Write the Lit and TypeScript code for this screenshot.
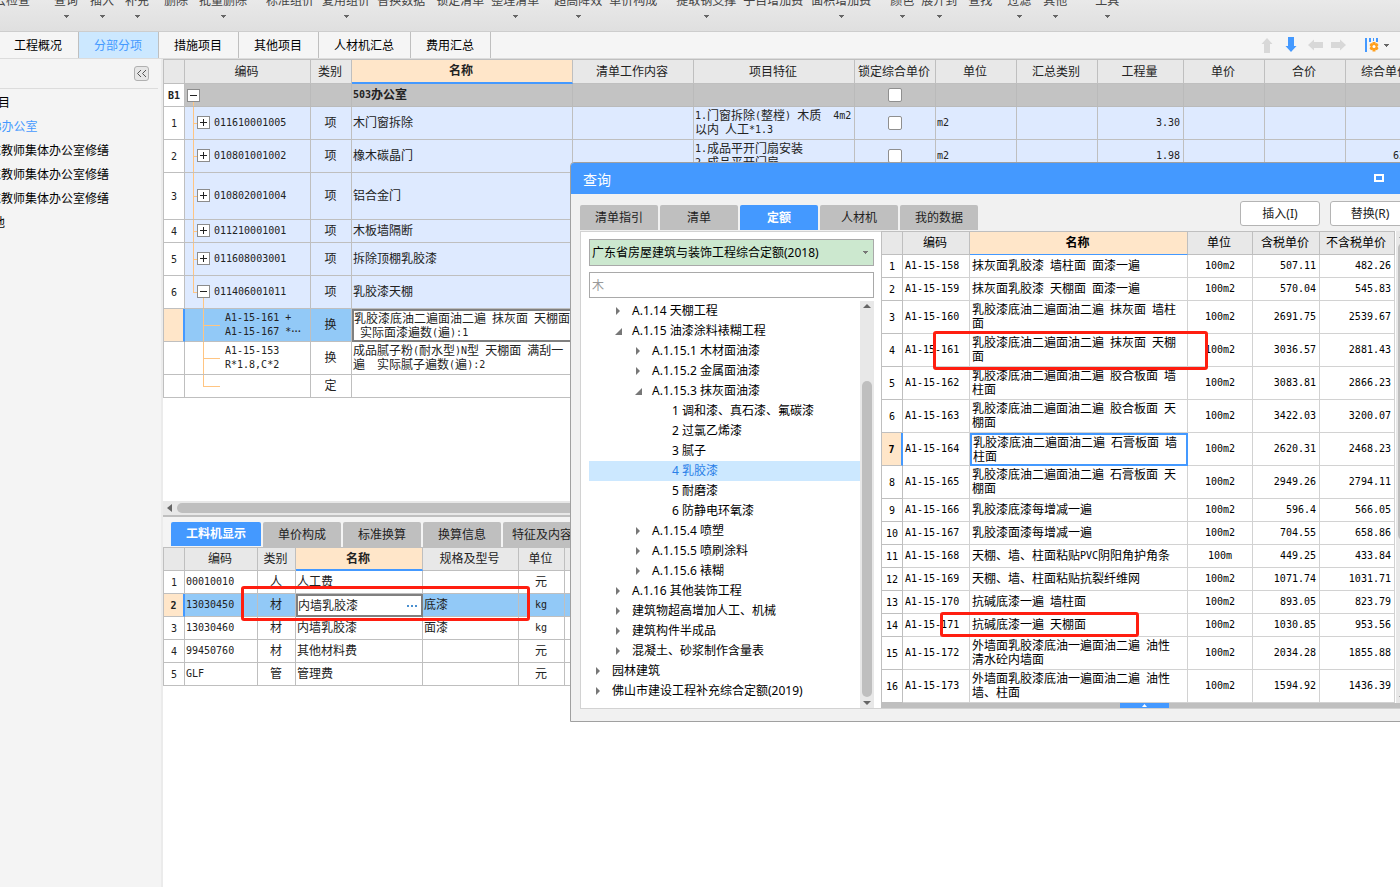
import { LitElement, html, css, svg, nothing } from "lit";
import { customElement, state } from "lit/decorators.js";
import { classMap } from "lit/directives/class-map.js";

/* Grid text: ideographs at 12px, Latin runs in a half-width monospace. */
const mono = (text: string) =>
  text
    .split(/([\x20-\x7e]+)/)
    .filter((part) => part)
    .map((part) => (/^[\x20-\x7e]/.test(part) ? html`<span class="half">${part}</span>` : part));

const lines = (text: string) => text.split("\n").map((l) => html`<span class="line">${mono(l)}</span>`);

const caret = () => html`<svg class="caret" width="5" height="3" viewBox="0 0 5 3" aria-hidden="true"><path d="M0 0h5v1h-1v1h-1v1h-1v-1h-1v-1h-1z" fill="currentColor" /></svg>`;

const shared = css`
  * { box-sizing: border-box; }
  button, input, select { font: inherit; color: inherit; margin: 0; border-radius: 0; }
  button { background: none; border: 0; padding: 0; white-space: nowrap; cursor: pointer; }
  ul { list-style: none; margin: 0; padding: 0; }
  table { border-collapse: separate; border-spacing: 0; table-layout: fixed; color: #222; }
  th, td {
    padding: 0 2px; line-height: 14px; font-weight: 400; text-align: left; white-space: pre;
    border-right: 1px solid #bfbfbf; border-bottom: 1px solid #bfbfbf; overflow: hidden; position: relative;
  }
  thead th { background: #e8e8e8; text-align: center; border-top: 1px solid #bfbfbf; height: 25px; padding: 0 2px 0 0; }
  th:first-child { border-left: 1px solid #bfbfbf; text-align: center; padding: 0; }
  tbody th { background: #fff; }
  thead th.hot { background: #ffe6c9; font-weight: 700; border-bottom: 2px solid #4499ff; }
  .half { font-family: "DejaVu Sans Mono", monospace; font-size: 10px; line-height: 10px; }
  td .half { vertical-align: 1px; }
  .line { display: block; height: 14px; }
  .c { text-align: center; }
  .r { text-align: right; padding-right: 3px; }
  .tab {
    width: 78px; height: 25px; background: #bfbfbf; color: #222; border-radius: 2px 2px 0 0; line-height: 24px; flex: none;
  }
  .tab.on { background: #4499ff; color: #fff; font-weight: 700; }
  .caret { display: block; color: #666; }
`;

type Tool = [label: string, gap: string, menu?: boolean];
const TOOLS: Tool[] = [
  ["云检查", "g0"], ["查询", "g24", true], ["插入", "g12", true], ["补充", "g11", true], ["删除", "g15"],
  ["批量删除", "g11", true], ["标准组价", "g19"], ["复用组价", "g8", true], ["替换数据", "g7"],
  ["锁定清单", "g11"], ["整理清单", "g7", true], ["超高降效", "g15", true], ["单价构成", "g7"],
  ["提取钢支撑", "g19", true], ["子目增加费", "g7"], ["面积增加费", "g8", true], ["颜色", "g19", true],
  ["展开到", "g7", true], ["查找", "g11"], ["过滤", "g15", true], ["其他", "g12", true], ["工具", "g28", true],
];

interface Item {
  no: string; kind: "section" | "item" | "sub"; h: string; box?: string; code: string; type: string;
  name: string; feature?: string; unit?: string; qty?: string; price?: string; last?: boolean; active?: boolean; lock?: boolean;
}
const ITEMS: Item[] = [
  { no: "B1", kind: "section", h: "h23", box: "-", code: "", type: "", name: "503办公室", lock: true },
  { no: "1", kind: "item", h: "h33", box: "+", code: "011610001005", type: "项", name: "木门窗拆除", feature: "1.门窗拆除(整樘) 木质  4m2\n以内 人工*1.3", unit: "m2", qty: "3.30", lock: true },
  { no: "2", kind: "item", h: "h33", box: "+", code: "010801001002", type: "项", name: "橡木碳晶门", feature: "1.成品平开门扇安装\n2.成品平开门扇", unit: "m2", qty: "1.98", price: "63.12", lock: true },
  { no: "3", kind: "item", h: "h47", box: "+", code: "010802001004", type: "项", name: "铝合金门" },
  { no: "4", kind: "item", h: "h23", box: "+", code: "011210001001", type: "项", name: "木板墙隔断" },
  { no: "5", kind: "item", h: "h33", box: "+", code: "011608003001", type: "项", name: "拆除顶棚乳胶漆" },
  { no: "6", kind: "item", h: "h33", box: "-", code: "011406001011", type: "项", name: "乳胶漆天棚", last: true },
  { no: "", kind: "sub", h: "h33", code: "A1-15-161 +\nA1-15-167 *···", type: "换", name: "乳胶漆底油二遍面油二遍 抹灰面 天棚面\n 实际面漆遍数(遍):1", active: true },
  { no: "", kind: "sub", h: "h33", code: "A1-15-153\nR*1.8,C*2", type: "换", name: "成品腻子粉(耐水型)N型 天棚面 满刮一\n遍  实际腻子遍数(遍):2" },
  { no: "", kind: "sub", h: "h23", code: "", type: "定", name: "", last: true },
];

@customElement("bill-grid")
class BillGrid extends LitElement {
  static styles = [
    shared,
    css`
      :host { display: block; overflow: hidden; background: #fff; min-height: 0; }
      table { width: 1264px; }
      td { padding-left: 1px; }
      .w22 { width: 22px; } .w126 { width: 126px; } .w41 { width: 41px; } .w221 { width: 221px; }
      .w121 { width: 121px; } .w161 { width: 161px; } .w81 { width: 81px; } .w86 { width: 86px; }
      .h23 { height: 23px; } .h33 { height: 33px; } .h47 { height: 47px; }
      .section td { background: #c3c3c3; border-color: #bababa; font-weight: 700; }
      .section th { font-weight: 700; }
      .item td { background: #deeaff; }
      .active td { background: #92c9f7; }
      .active th { background: #ffe6c9; border-right: 2px solid #4499ff; }
      .active td.name { background: #fff; border: 2px solid #808080; padding: 0; }
      .entry { display: flex; align-items: center; gap: 4px; padding-left: 11px; }
      .section .entry { padding-left: 1px; }
      .sub .entry { padding-left: 39px; }
      .box { width: 13px; height: 13px; background: #fff; border: 1px solid #8c8c8c; position: relative; z-index: 1; flex: none; display: block; }
      .item .box { margin-bottom: 2px; }
      .box svg { display: block; }
      .stem { position: absolute; width: 1px; background: #ffc582; top: 0; bottom: -1px; left: 8px; }
      .twig { position: absolute; height: 1px; background: #ffc582; left: 8px; width: 6px; top: 50%; }
      .stem.end { bottom: 50%; }
      .section .stem, .stem.child { top: 50%; }
      .sub .stem, .stem.child { left: 18px; }
      .sub .twig { left: 18px; width: 17px; }
      input { appearance: none; width: 14px; height: 14px; border: 1px solid #8f8f8f; border-radius: 2px; background: #fff; display: block; margin: 0 auto; }
    `,
  ];

  private box(sign: string) {
    return html`<button class="box" aria-label=${sign === "+" ? "展开" : "折叠"}><svg width="11" height="11" viewBox="0 0 11 11">
      <path d="M2 5.5h7${sign === "+" ? "M5.5 2v7" : ""}" stroke="#222" fill="none" /></svg></button>`;
  }

  render() {
    const cols = ["w22", "w126", "w41", "w221", "w121", "w161", "w81", "w81", "w81", "w86", "w81", "w81", "w81"];
    const heads = ["", "编码", "类别", "名称", "清单工作内容", "项目特征", "锁定综合单价", "单位", "汇总类别", "工程量", "单价", "合价", "综合单价"];
    return html`<table>
      <colgroup>${cols.map((c) => html`<col class=${c} />`)}</colgroup>
      <thead><tr>${heads.map((h) => html`<th scope="col" class=${classMap({ hot: h === "名称" })}>${h}</th>`)}</tr></thead>
      <tbody>${ITEMS.map((i) => html`<tr class=${classMap({ [i.kind]: true, [i.h]: true, active: !!i.active })}>
        <th scope="row">${mono(i.no)}</th>
        <td><span class=${classMap({ stem: true, end: !!i.last, root: i.kind === "section" })}></span>${i.kind === "section" ? nothing : html`<span class="twig"></span>`}${i.kind === "item" && i.last ? html`<span class="stem child"></span>` : nothing}<div class="entry">${i.box ? this.box(i.box) : nothing}<div>${i.code ? lines(i.code) : nothing}</div></div></td>
        <td class="c">${i.type}</td>
        <td class="name">${lines(i.name)}</td>
        <td></td>
        <td>${i.feature ? lines(i.feature) : nothing}</td>
        <td>${i.lock ? html`<input type="checkbox" aria-label="锁定综合单价" />` : nothing}</td>
        <td>${mono(i.unit ?? "")}</td>
        <td></td>
        <td class="r">${mono(i.qty ?? "")}</td>
        <td></td><td></td>
        <td class="r">${mono(i.price ?? "")}</td>
      </tr>`)}</tbody>
    </table>`;
  }
}

const RESOURCES = [
  ["1", "00010010", "人", "人工费", "", "元"],
  ["2", "13030450", "材", "内墙乳胶漆", "底漆", "kg"],
  ["3", "13030460", "材", "内墙乳胶漆", "面漆", "kg"],
  ["4", "99450760", "材", "其他材料费", "", "元"],
  ["5", "GLF", "管", "管理费", "", "元"],
];

@customElement("resource-panel")
class ResourcePanel extends LitElement {
  static styles = [
    shared,
    css`
      :host { display: block; background: #fff; overflow: hidden; position: relative; }
      .tabs { display: flex; gap: 2px; padding: 5px 8px 0; background: #f4f4f4; }
      .tab.on { height: 24px; }
      .tab:first-child { width: 90px; }
      table { width: 483px; }
      thead th { height: 24px; }
      tbody tr { height: 23px; }
      td { padding: 0 2px 0 1px; }
      .w22 { width: 22px; } .w73 { width: 73px; } .w38 { width: 38px; } .w127 { width: 127px; } .w96 { width: 96px; } .w46 { width: 46px; } .w81 { width: 81px; }
      .active td { background: #92c9f7; }
      .active th { background: #ffe6c9; border-right: 2px solid #4499ff; font-weight: 700; }
      .active td.name { background: #fff; border: 2px solid #808080; padding: 0 3px 0 0; }
      .pick { display: flex; justify-content: space-between; align-items: center; }
      .more { width: 11px; height: 10px; display: block; }
      .more svg { display: block; }
      .mark { position: absolute; left: 78px; top: 69px; width: 289px; height: 35px; border: 3px solid #ff1e10; border-radius: 3px; pointer-events: none; }
    `,
  ];
  render() {
    const cols = ["w22", "w73", "w38", "w127", "w96", "w46", "w81"];
    return html`
      <div class="tabs">
        ${["工料机显示", "单价构成", "标准换算", "换算信息", "特征及内容"].map((t, i) => html`<button class=${classMap({ tab: true, on: i === 0 })}>${t}</button>`)}
      </div>
      <table>
        <colgroup>${cols.map((c) => html`<col class=${c} />`)}</colgroup>
        <thead><tr>${["", "编码", "类别", "名称", "规格及型号", "单位", ""].map((h) => html`<th scope="col" class=${classMap({ hot: h === "名称" })}>${h}</th>`)}</tr></thead>
        <tbody>${RESOURCES.map(([no, code, type, name, spec, unit]) => html`<tr class=${classMap({ active: no === "2" })}>
          <th scope="row">${mono(no)}</th><td>${mono(code)}</td><td class="c">${type}</td>
          <td class="name">${no === "2"
            ? html`<div class="pick"><span>${name}</span><button class="more" aria-label="选择"><svg width="11" height="10"><path d="M0 4h2v2h-2zM4 4h2v2h-2zM8 4h2v2h-2z" fill="#4a90d0" /></svg></button></div>`
            : name}</td>
          <td>${spec}</td><td class="c">${mono(unit)}</td><td></td></tr>`)}</tbody>
      </table>
      <div class="mark"></div>`;
  }
}

type Node = [depth: number, label: string, mark: "closed" | "open" | "leaf"];
const NODES: Node[] = [
  [1, "A.1.14 天棚工程", "closed"], [1, "A.1.15 油漆涂料裱糊工程", "open"],
  [2, "A.1.15.1 木材面油漆", "closed"], [2, "A.1.15.2 金属面油漆", "closed"], [2, "A.1.15.3 抹灰面油漆", "open"],
  [3, "1 调和漆、真石漆、氟碳漆", "leaf"], [3, "2 过氯乙烯漆", "leaf"], [3, "3 腻子", "leaf"], [3, "4 乳胶漆", "leaf"],
  [3, "5 耐磨漆", "leaf"], [3, "6 防静电环氧漆", "leaf"],
  [2, "A.1.15.4 喷塑", "closed"], [2, "A.1.15.5 喷刷涂料", "closed"], [2, "A.1.15.6 裱糊", "closed"],
  [1, "A.1.16 其他装饰工程", "closed"], [1, "建筑物超高增加人工、机械", "closed"], [1, "建筑构件半成品", "closed"],
  [1, "混凝土、砂浆制作含量表", "closed"], [0, "园林建筑", "closed"], [0, "佛山市建设工程补充综合定额(2019)", "closed"],
];

const QUOTAS = [
  ["A1-15-158", "抹灰面乳胶漆 墙柱面 面漆一遍", "100m2", "507.11", "482.26"],
  ["A1-15-159", "抹灰面乳胶漆 天棚面 面漆一遍", "100m2", "570.04", "545.83"],
  ["A1-15-160", "乳胶漆底油二遍面油二遍 抹灰面 墙柱\n面", "100m2", "2691.75", "2539.67"],
  ["A1-15-161", "乳胶漆底油二遍面油二遍 抹灰面 天棚\n面", "100m2", "3036.57", "2881.43"],
  ["A1-15-162", "乳胶漆底油二遍面油二遍 胶合板面 墙\n柱面", "100m2", "3083.81", "2866.23"],
  ["A1-15-163", "乳胶漆底油二遍面油二遍 胶合板面 天\n棚面", "100m2", "3422.03", "3200.07"],
  ["A1-15-164", "乳胶漆底油二遍面油二遍 石膏板面 墙\n柱面", "100m2", "2620.31", "2468.23"],
  ["A1-15-165", "乳胶漆底油二遍面油二遍 石膏板面 天\n棚面", "100m2", "2949.26", "2794.11"],
  ["A1-15-166", "乳胶漆底漆每增减一遍", "100m2", "596.4", "566.05"],
  ["A1-15-167", "乳胶漆面漆每增减一遍", "100m2", "704.55", "658.86"],
  ["A1-15-168", "天棚、墙、柱面粘贴PVC阴阳角护角条", "100m", "449.25", "433.84"],
  ["A1-15-169", "天棚、墙、柱面粘贴抗裂纤维网", "100m2", "1071.74", "1031.71"],
  ["A1-15-170", "抗碱底漆一遍 墙柱面", "100m2", "893.05", "823.79"],
  ["A1-15-171", "抗碱底漆一遍 天棚面", "100m2", "1030.85", "953.56"],
  ["A1-15-172", "外墙面乳胶漆底油一遍面油二遍 油性\n清水砼内墙面", "100m2", "2034.28", "1855.88"],
  ["A1-15-173", "外墙面乳胶漆底油一遍面油二遍 油性\n墙、柱面", "100m2", "1594.92", "1436.39"],
];

@customElement("query-dialog")
class QueryDialog extends LitElement {
  @state() private picked = "4 乳胶漆";

  static styles = [
    shared,
    css`
      :host { display: flex; flex-direction: column; background: #f1f1f1; border: 1px solid #a0a0a0; border-radius: 4px 0 0 0; overflow: hidden; }
      .title { display: flex; align-items: center; justify-content: space-between; height: 31px; flex: none; background: #4499ff; color: #fff; font-size: 14px; padding: 2px 45px 0 12px; }
      .title svg { display: block; margin-bottom: 4px; }
      .bar { display: flex; align-items: flex-end; height: 37px; flex: none; padding: 0 0 1px 9px; gap: 2px; }
      .gap { flex: 1; }
      .act { width: 80px; height: 25px; border: 1px solid #b4b4b4; border-radius: 3px; background: #fff; color: #222; margin: 0 19px 4px 0; align-self: flex-end; }
      .act + .act { margin-left: -11px; }
      .body { display: flex; flex: 1; min-height: 0; padding: 0 0 12px 9px; }
      .left { width: 301px; flex: none; background: #fff; border: 1px solid #d2d2d2; border-right: 0; padding: 7px 7px 0 8px; display: flex; flex-direction: column; }
      .drop { position: relative; flex: none; color: #000; }
      select { appearance: none; display: block; width: 100%; height: 27px; background: #cce8cf; border: 1px solid #a9a9a9; padding: 0 20px 0 2px; }
      .drop .caret { position: absolute; right: 6px; top: 12px; color: #777; }
      .find { display: block; width: 100%; height: 26px; flex: none; margin: 6px 0 3px; border: 1px solid #a9a9a9; background: #fff; padding: 0 2px; }
      .find::placeholder { color: #999; opacity: 1; }
      .tree { display: flex; flex: 1; min-height: 0; color: #000; }
      .tree ul { flex: 1; overflow: hidden; }
      .node { display: flex; align-items: center; width: 100%; height: 20px; line-height: 20px; gap: 12px; }
      .node.on { background: #cce8ff; color: #2a7fe8; }
      .node svg { flex: none; overflow: visible; }
      .d0 { padding-left: 4px; } .d1 { padding-left: 24px; } .d2 { padding-left: 44px; } .d3 { padding-left: 64px; }
      .vbar { width: 14px; flex: none; background: #e8e8e8; display: flex; flex-direction: column; align-items: center; padding: 3px 0; }
      .vbar svg { flex: none; }
      .track { flex: 1; width: 10px; padding: 73px 0 4px; display: flex; }
      .thumb { flex: 1; background: #bfbfbf; border-radius: 5px; }
      .right { flex: 1; min-width: 0; display: flex; flex-direction: column; background: #fff; border-bottom: 1px solid #d2d2d2; }
      .list { flex: 1; min-height: 0; overflow: hidden; display: flex; gap: 1px; }
      table { width: 514px; height: max-content; flex: none; color: #000; }
      .w22 { width: 22px; } .w67 { width: 67px; } .w218 { width: 218px; } .w65 { width: 65px; } .w75 { width: 75px; }
      thead th { height: 24px; }
      thead th.hot { border-bottom-width: 1px; }
      td { border-color: #d2d2d2; }
      .h23 { height: 23px; } .h33 { height: 33px; }
      .active th { background: #ffe6c9; border-right: 2px solid #4499ff; font-weight: 700; }
      .active td.name { border: 2px solid #4499ff; padding: 0 0 0 1px; }
      .vbar.wide .track { padding: 5px 0 156px; }
      .hbar { height: 5px; flex: none; background: #bfbfbf; padding-left: 239px; }
      .grip { display: block; width: 49px; height: 5px; background: #4499ff; }
      .grip svg { display: block; margin: 0 auto; }
      .mark { position: absolute; border: 3px solid #ff1e10; border-radius: 3px; pointer-events: none; }
      .m1 { left: 362px; top: 168px; width: 275px; height: 39px; }
      .m2 { left: 369px; top: 449px; width: 199px; height: 25px; }
    `,
  ];

  private marker(kind: string) {
    if (kind === "leaf") return html`<svg width="7" height="8"></svg>`;
    return kind === "open"
      ? html`<svg width="7" height="8" viewBox="0 0 7 8"><path d="M9 1v7h-7z" fill="#777" /></svg>`
      : html`<svg width="7" height="8" viewBox="0 0 7 8"><path d="M3 0v8l4-4z" fill="#777" /></svg>`;
  }

  private tick(up: boolean) {
    return html`<svg width="8" height="4" viewBox="0 0 8 4">${up ? svg`<path d="M0 4l4-4 4 4z" fill="#666" />` : svg`<path d="M0 0h8l-4 4z" fill="#666" />`}</svg>`;
  }

  render() {
    const cols = ["w22", "w67", "w218", "w65", "w67", "w75"];
    return html`
      <div class="title"><span>查询</span><button aria-label="最大化"><svg width="10" height="8"><path d="M1 1h8v6h-8z" fill="none" stroke="#fff" stroke-width="2" /></svg></button></div>
      <div class="bar">
        ${["清单指引", "清单", "定额", "人材机", "我的数据"].map((t, i) => html`<button class=${classMap({ tab: true, on: i === 2 })}>${t}</button>`)}
        <span class="gap"></span>
        <button class="act">插入(I)</button><button class="act">替换(R)</button>
      </div>
      <div class="body">
        <div class="left">
          <div class="drop"><select aria-label="定额库"><option>广东省房屋建筑与装饰工程综合定额(2018)</option></select>${caret()}</div>
          <input class="find" type="text" placeholder="木" aria-label="查找" />
          <div class="tree">
            <ul>${NODES.map(([depth, label, mark]) => html`<li><button class=${classMap({ node: true, ["d" + depth]: true, on: label === this.picked })} @click=${() => (this.picked = label)}>${this.marker(mark)}<span>${label}</span></button></li>`)}</ul>
            <div class="vbar">${this.tick(true)}<div class="track"><div class="thumb"></div></div>${this.tick(false)}</div>
          </div>
        </div>
        <div class="right">
          <div class="list">
            <table>
              <colgroup>${cols.map((c) => html`<col class=${c} />`)}</colgroup>
              <thead><tr>${["", "编码", "名称", "单位", "含税单价", "不含税单价"].map((h) => html`<th scope="col" class=${classMap({ hot: h === "名称" })}>${h}</th>`)}</tr></thead>
              <tbody>${QUOTAS.map(([code, name, unit, gross, net], i) => html`<tr class=${classMap({ h33: name.includes("\n"), h23: !name.includes("\n"), active: i === 6 })}>
                <th scope="row">${mono(String(i + 1))}</th><td>${mono(code)}</td><td class="name">${lines(name)}</td>
                <td class="c">${mono(unit)}</td><td class="r">${mono(gross)}</td><td class="r">${mono(net)}</td></tr>`)}</tbody>
            </table>
            <div class="vbar wide">${this.tick(true)}<div class="track"><div class="thumb"></div></div>${this.tick(false)}</div>
          </div>
          <div class="hbar"><button class="grip" aria-label="展开详情"><svg width="5" height="5"><path d="M0 4l2.500-3 2.500 3z" fill="#fff" /></svg></button></div>
        </div>
      </div>
      <div class="mark m1"></div>
      <div class="mark m2"></div>`;
  }
}

@customElement("app-root")
class AppRoot extends LitElement {
  static styles = [
    shared,
    css`
      :host {
        display: flex; flex-direction: column; height: 100vh; position: relative; overflow: hidden; background: #fff; color: #222;
        font-family: "Noto Sans", "Noto Sans CJK SC", sans-serif; font-size: 12px; line-height: 16px;
      }
      .tools { display: flex; align-items: flex-start; height: 31px; flex: none; background: linear-gradient(#e9e9e9, #dfdfdf); overflow: hidden; }
      .tool { display: flex; flex-direction: column; align-items: center; gap: 6px; margin-top: -7px; flex: none; color: #444; }
      .g0 { margin-left: -6px; } .g7 { margin-left: 7px; } .g8 { margin-left: 8px; } .g11 { margin-left: 11px; } .g12 { margin-left: 12px; }
      .g15 { margin-left: 15px; } .g19 { margin-left: 19px; } .g24 { margin-left: 24px; } .g28 { margin-left: 28px; }
      .pages { display: flex; height: 28px; flex: none; background: #f5f5f5; border-top: 1px solid #cdcdcd; border-bottom: 1px solid #dcdcdc; }
      .page { padding: 2px 16px 0 15px; border-right: 1px solid #bfbfbf; color: #000; }
      .page:first-child { padding-left: 14px; }
      .page.on { background: #cce8ff; color: #4499ff; }
      .nav { display: flex; align-items: center; gap: 8px; margin-left: auto; padding-right: 11px; }
      .nav button { display: flex; align-items: center; gap: 5px; }
      .nav .cfg { margin-left: 10px; }
      .work { display: flex; flex: 1; min-height: 0; }
      .side { width: 163px; flex: none; background: #f4f4f4; border-right: 2px solid #ebebeb; overflow: hidden; color: #000; }
      .fold { display: flex; justify-content: flex-end; height: 30px; padding: 7px 9px 0 0; border-bottom: 1px solid #dcdcdc; margin-right: 3px; }
      .fold button { width: 15px; height: 15px; border: 1px solid #b0b0b0; border-radius: 3px; background: #e6e6e6; }
      .fold svg { display: block; }
      .side ul { padding-top: 2px; }
      .side li { height: 24px; line-height: 24px; white-space: nowrap; }
      .side a { color: inherit; text-decoration: none; }
      .side .p0 { margin-left: -38px; } .side .p1 { margin-left: -19px; } .side .p2 { margin-left: -11px; }
      .side .on { color: #4499ff; }
      .main { flex: 1; min-width: 0; display: flex; flex-direction: column; }
      bill-grid { flex: 1; }
      .scroll { height: 16px; flex: none; display: flex; align-items: center; gap: 5px; padding-left: 4px; background: #e8e8e8; border-bottom: 2px solid #bfbfbf; }
      .scroll i { flex: 1; height: 10px; background: #bfbfbf; border-radius: 5px; }
      resource-panel { height: 370px; flex: none; }
      query-dialog { position: absolute; left: 570px; right: -30px; top: 162px; height: 560px; }
    `,
  ];

  private arrow(angle: number, color: string) {
    return html`<button aria-label="移动"><svg width="16" height="16" viewBox="0 0 16 16"><path d="M8 1l5.500 6h-2.500v9h-6v-9h-2.500z" transform="rotate(${angle} 8 8)" fill=${color} /></svg></button>`;
  }

  render() {
    return html`
      <div class="tools">${TOOLS.map(([label, gap, menu]) => html`<button class="tool ${gap}">${label}${menu ? caret() : nothing}</button>`)}</div>
      <nav class="pages">
        ${["工程概况", "分部分项", "措施项目", "其他项目", "人材机汇总", "费用汇总"].map((p, i) => html`<button class=${classMap({ page: true, on: i === 1 })}>${p}</button>`)}
        <div class="nav">
          ${this.arrow(0, "#d8d8d8")}${this.arrow(180, "#4499ff")}${this.arrow(-90, "#d8d8d8")}${this.arrow(90, "#d8d8d8")}
          <button class="cfg" aria-label="列设置"><svg width="14" height="16" viewBox="0 0 14 16">
            <path d="M0 1h2v14h-2zM4 1h2v4h-2zM8 1h1v3h-1zM11 1h2v4h-2z" fill="#4499ff" />
            <path d="M7.500 5h3v1.500l1.500-.5 1.500 2-1.200 1.500 1.200 1.800-1.500 2-1.500-.6v1.800h-3v-1.800l-1.500.6-1.500-2 1.200-1.800-1.200-1.500 1.500-2 1.500.5z" fill="#ffa01e" />
            <circle cx="9" cy="9.500" r="1.500" fill="#fff" /></svg>${caret()}</button>
        </div>
      </nav>
      <div class="work">
        <aside class="side">
          <div class="fold"><button aria-label="收起"><svg width="13" height="13" viewBox="0 0 13 13"><path d="M6 3l-3.500 3.500 3.500 3.500M11 3l-3.500 3.500 3.500 3.500" fill="none" stroke="#555" /></svg></button></div>
          <ul>
            <li class="p0"><a href="#">工程项目</a></li>
            <li class="p1 on"><a href="#">503办公室</a></li>
            <li class="p2"><a href="#">栋教师集体办公室修缮</a></li>
            <li class="p2"><a href="#">栋教师集体办公室修缮</a></li>
            <li class="p2"><a href="#">栋教师集体办公室修缮</a></li>
            <li class="p1"><a href="#">其他</a></li>
          </ul>
        </aside>
        <main class="main">
          <bill-grid></bill-grid>
          <div class="scroll"><svg width="5" height="8"><path d="M5 0v8l-5-4z" fill="#666" /></svg><i></i></div>
          <resource-panel></resource-panel>
        </main>
      </div>
      <query-dialog></query-dialog>`;
  }
}
